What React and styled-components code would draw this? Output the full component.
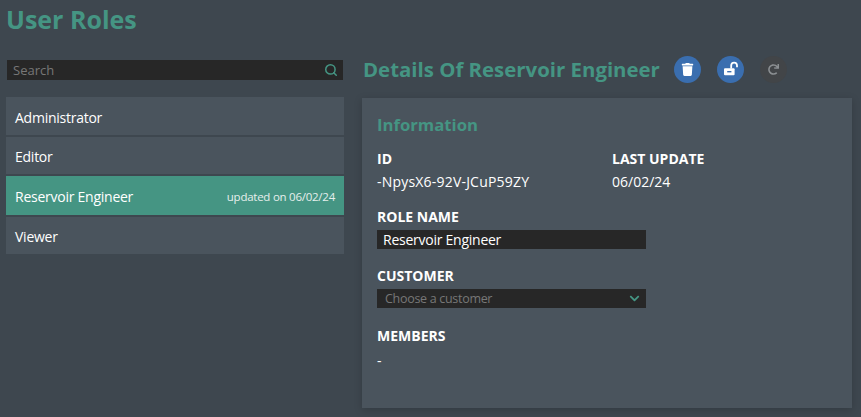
import React from "react";
import styled, { createGlobalStyle } from "styled-components";
import { FaChevronDown, FaTrash, FaRedo } from "react-icons/fa";
import { Search } from "lucide-react";

const Global = createGlobalStyle`
  html, body { margin: 0; padding: 0; height: 100%; }
  body { background: #3e474f; font-family: "Open Sans", "Noto Sans", sans-serif; overflow: hidden; }
`;
const Page = styled.div`
  width: 861px; height: 417px; box-sizing: border-box; padding: 3px 9px 9px 6px;
  display: flex; flex-direction: column;
`;
const Title = styled.h1`
  margin: 0; height: 33px; font-size: 25px; line-height: 33px; font-weight: 700; color: #459583;
`;
const Columns = styled.div`
  display: grid; grid-template-columns: 338px 490px; column-gap: 18px; margin-top: 23px; flex: 1;
`;
const Left = styled.div`display: flex; flex-direction: column;`;
const SearchBar = styled.div`
  height: 20px; margin: 1px 1px 0 1px; background: #272727; display: flex; align-items: center;
  justify-content: space-between; padding: 0 5px 0 6px; color: #777; font-size: 13px;
`;
const List = styled.div`
  margin-top: 17px; display: flex; flex-direction: column; gap: 2px;
`;
const Row = styled.div`
  height: ${p => p.$h}px; box-sizing: border-box; padding: 2px 9px 0; display: flex; align-items: center;
  justify-content: space-between; font-size: 14px; letter-spacing: -0.25px; color: #fff;
  background: ${p => (p.$active ? "#459583" : "#4a545d")};
`;
const RowNote = styled.span`font-size: 11.5px; letter-spacing: -0.25px; color: #e6efec;`;
const Right = styled.div`display: flex; flex-direction: column;`;
const Head = styled.div`
  height: 20px; display: flex; align-items: center; padding-left: 1px;
`;
const HeadTitle = styled.h2`
  margin: 0; font-size: 20.4px; font-weight: 700; color: #459583; white-space: nowrap; width: 311px;
`;
const Round = styled.button`
  width: 27px; height: 27px; padding: 0; border: 0; border-radius: 50%; display: flex; flex: none;
  align-items: center; justify-content: center;
  background: ${p => (p.$off ? "#424548" : "#3a6eaf")};
  color: ${p => (p.$off ? "#8b8f92" : "#fff")};
  margin-right: 16px;
`;
const Panel = styled.section`
  margin-top: 19px; height: 310px; box-sizing: border-box; background: #4a545d; padding: 15px;
  box-shadow: 0 2px 8px rgba(0,0,0,.18);
`;
const Info = styled.h3`
  margin: 0; font-size: 16.7px; line-height: 23px; font-weight: 700; color: #459583;
`;
const Two = styled.div`display: grid; grid-template-columns: 235px 1fr; margin-top: 13px;`;
const Label = styled.div`
  font-size: 14px; line-height: 19px; font-weight: 700; color: #fff;
`;
const Value = styled.div`
  font-size: 14px; line-height: 19px; color: #fff;
  margin-top: ${p => p.$gap ?? 4}px;
  letter-spacing: ${p => (p.$wide ? "0.2px" : "0")};
`;
const Field = styled.div`margin-top: ${p => p.$mt}px;`;
const InputBox = styled.div`
  width: 269px; height: 19px; margin-top: 4px; background: #272727; box-sizing: border-box;
  padding: 0 6px; display: flex; align-items: center; justify-content: space-between;
  font-size: ${p => (p.$muted ? "12.5px" : "14px")};
  letter-spacing: ${p => (p.$muted ? "-0.3px" : "-0.25px")};
  padding-left: ${p => (p.$muted ? "8px" : "6px")};
  color: ${p => (p.$muted ? "#777" : "#fff")};
`;
const Unlock = () => (
  <svg width="16" height="16" viewBox="0 0 16 16" aria-hidden="true">
    <path d="M8.2 7.5V4.6a2.9 2.9 0 0 1 5.8 0v1.6" fill="none" stroke="currentColor" strokeWidth="1.8" />
    <rect x="1" y="7.2" width="10.6" height="7" rx="1" fill="currentColor" />
    <rect x="4.2" y="10" width="4.2" height="1.4" fill="#3a6eaf" />
  </svg>
);

export default function App() {
  return (
    <Page>
      <Global />
      <Title>User Roles</Title>
      <Columns>
        <Left>
          <SearchBar>Search<Search size={14} color="#459583" strokeWidth={2.6} /></SearchBar>
          <List>
            <Row $h={38}>Administrator</Row>
            <Row $h={37}>Editor</Row>
            <Row $h={39} $active>Reservoir Engineer<RowNote>updated on 06/02/24</RowNote></Row>
            <Row $h={37}>Viewer</Row>
          </List>
        </Left>
        <Right>
          <Head>
            <HeadTitle>Details Of Reservoir Engineer</HeadTitle>
            <Round aria-label="delete"><FaTrash size={13} /></Round>
            <Round aria-label="unlock"><Unlock /></Round>
            <Round $off aria-label="refresh"><FaRedo size={11} /></Round>
          </Head>
          <Panel>
            <Info>Information</Info>
            <Two>
              <div><Label>ID</Label><Value $wide>-NpysX6-92V-JCuP59ZY</Value></div>
              <div><Label>LAST UPDATE</Label><Value>06/02/24</Value></div>
            </Two>
            <Field $mt={16}>
              <Label>ROLE NAME</Label>
              <InputBox>Reservoir Engineer</InputBox>
            </Field>
            <Field $mt={17}>
              <Label>CUSTOMER</Label>
              <InputBox $muted>Choose a customer<FaChevronDown size={11} color="#459583" /></InputBox>
            </Field>
            <Field $mt={18}>
              <Label>MEMBERS</Label>
              <Value $gap={6}>-</Value>
            </Field>
          </Panel>
        </Right>
      </Columns>
    </Page>
  );
}
